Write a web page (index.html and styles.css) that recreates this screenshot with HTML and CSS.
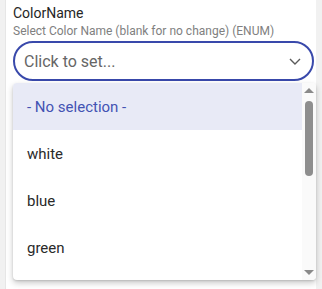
FILE: index.html
```html
<!DOCTYPE html>
<html lang="en">
<head>
  <meta charset="UTF-8" />
  <title>Color Name</title>
  <link rel="stylesheet" href="styles.css">
</head>
<body>
  <div class="panel">
    <div class="field">
      <div class="field-label">ColorName</div>
      <div class="field-hint">Select Color Name (blank for no change) (ENUM)</div>
      <div class="select">
        <span class="select-value">Click to set...</span>
        <svg class="chevron" width="12" height="7" viewBox="0 0 12 7">
          <path d="M1 1 L6 6 L11 1" fill="none" stroke="#5a5a5a" stroke-width="1.4" />
        </svg>
      </div>

      <div class="menu">
        <ul class="options">
          <li class="option selected">- No selection -</li>
          <li class="option">white</li>
          <li class="option">blue</li>
          <li class="option">green</li>
        </ul>
        <div class="scrollbar">
          <span class="arrow-up"></span>
          <span class="thumb"></span>
          <span class="arrow-down"></span>
        </div>
      </div>
    </div>
  </div>
</body>
</html>
```

FILE: styles.css
```css
* {
  box-sizing: border-box;
}

body {
  margin: 0;
  padding: 0;
  font-family: Roboto, 'Liberation Sans', sans-serif;
  background: #f1f1f1;
  overflow: hidden;
}

.panel {
  margin-left: 5px;
  width: 311px;
  min-height: 289px;
  background: #ffffff;
  border-left: 1px solid #e6e6e6;
  padding: 4px 0 0 7px;
}

.field {
  position: relative;
}

.field-label {
  font-size: 14px;
  line-height: 18px;
  color: #262626;
}

.field-hint {
  font-size: 12px;
  line-height: 16px;
  color: #808080;
  margin-top: 1px;
}

.select {
  margin-top: 2px;
  width: 301px;
  height: 40px;
  border: 2px solid #3949ab;
  border-radius: 20px;
  display: flex;
  align-items: center;
  justify-content: space-between;
  padding: 0 11px 0 9px;
}

.select-value {
  font-size: 16px;
  color: #666;
}

.chevron {
  display: block;
}

.menu {
  position: absolute;
  top: 79px;
  left: 0;
  width: 303px;
  height: 197px;
  background: #ffffff;
  border-radius: 4px;
  box-shadow: 0 3px 6px rgba(0, 0, 0, 0.22), 0 1px 2px rgba(0, 0, 0, 0.12);
  display: flex;
  overflow: hidden;
}

.options {
  list-style: none;
  margin: 0;
  padding: 0;
  flex: 1;
}

.option {
  height: 47px;
  display: flex;
  align-items: center;
  padding-left: 14px;
  font-size: 15px;
  color: #2a2a2a;
}

.option.selected {
  background: #e8eaf6;
  color: #4353b3;
}

.scrollbar {
  width: 14px;
  background: #fafafa;
  display: flex;
  flex-direction: column;
  align-items: center;
  padding-top: 5px;
}

.arrow-up {
  width: 0;
  height: 0;
  border-left: 5px solid transparent;
  border-right: 5px solid transparent;
  border-bottom: 5px solid #8a8a8a;
}

.thumb {
  margin-top: 8px;
  width: 8px;
  height: 75px;
  border-radius: 4px;
  background: #8e8e8e;
}

.arrow-down {
  margin-top: auto;
  margin-bottom: 5px;
  width: 0;
  height: 0;
  border-left: 5px solid transparent;
  border-right: 5px solid transparent;
  border-top: 5px solid #8a8a8a;
}
```
